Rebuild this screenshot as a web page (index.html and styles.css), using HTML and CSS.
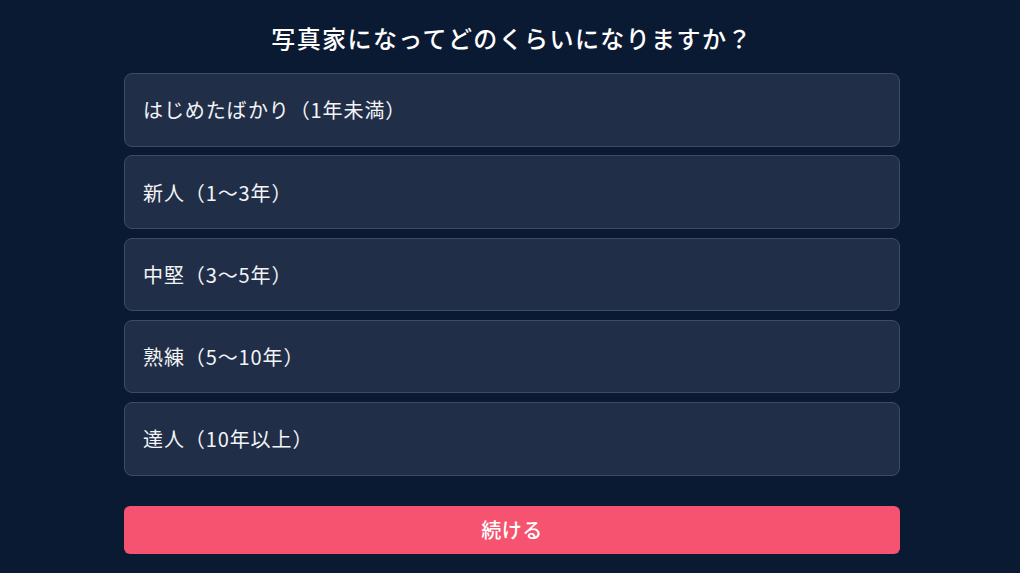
FILE: index.html
```html
<!DOCTYPE html>
<html lang="ja">
<head>
<meta charset="utf-8">
<link rel="stylesheet" href="styles.css">
</head>
<body>
<main class="page">
  <h1 class="title">写真家になってどのくらいになりますか？</h1>
  <div class="options">
    <div class="option">はじめたばかり（1年未満）</div>
    <div class="option">新人（1〜3年）</div>
    <div class="option">中堅（3〜5年）</div>
    <div class="option">熟練（5〜10年）</div>
    <div class="option">達人（10年以上）</div>
  </div>
  <button class="continue">続ける</button>
</main>
</body>
</html>
```
FILE: styles.css
```css
html, body {
  margin: 0;
  padding: 0;
  background: #0b1a33;
  height: 100%;
}
body {
  font-family: "Noto Sans CJK JP", "Noto Sans", sans-serif;
  color: #ffffff;
}
.page {
  display: flex;
  flex-direction: column;
  padding: 21px 120px 0 124px;
}
.title {
  margin: 0 0 18px 0;
  font-size: 24px;
  line-height: 34px;
  font-weight: 500;
  letter-spacing: 1.4px;
  text-align: center;
}
.options {
  display: flex;
  flex-direction: column;
  gap: 8.75px;
}
.option {
  height: 73.5px;
  box-sizing: border-box;
  display: flex;
  align-items: center;
  padding: 0 18px;
  background: #212e47;
  border: 1px solid #3f4b61;
  border-radius: 8px;
  font-size: 20px;
  letter-spacing: 0.9px;
  color: #f2f4f7;
}
.continue {
  margin-top: 30.5px;
  height: 47.5px;
  border: none;
  border-radius: 6px;
  background: #f5536f;
  color: #ffffff;
  font-family: inherit;
  font-size: 20px;
  font-weight: 500;
  letter-spacing: 0.5px;
}
```
